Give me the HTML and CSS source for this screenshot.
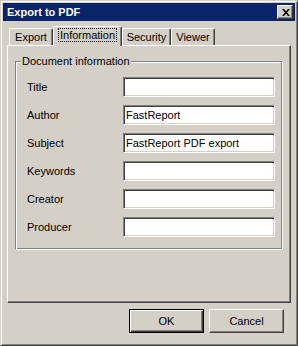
FILE: index.html
```html
<!DOCTYPE html>
<html lang="en">
<head>
    <meta charset="UTF-8">
    <title>Export to PDF</title>
    <link rel="stylesheet" href="styles.css">
</head>
<body>
    <div class="window">
        <div class="titlebar">
            <span class="caption">Export to PDF</span>
            <div class="close">
                <svg width="8" height="7" viewBox="0 0 8 7">
                    <path d="M0 0h2l2 2.2 2-2.2h2l-3 3.5 3 3.5h-2l-2-2.2-2 2.2h-2l3-3.5z" fill="#000"/>
                </svg>
            </div>
        </div>
        <div class="client">
            <div class="tabs">
                <div class="tab tab-export">Export</div>
                <div class="tab tab-info active"><span class="focus">Information</span></div>
                <div class="tab tab-security">Security</div>
                <div class="tab tab-viewer">Viewer</div>
            </div>
            <div class="panel">
                <div class="group">
                    <span class="legend">Document information</span>
                    <div class="fields">
                        <label>Title</label>
                        <div class="edit"></div>
                        <label>Author</label>
                        <div class="edit">FastReport</div>
                        <label>Subject</label>
                        <div class="edit">FastReport PDF export</div>
                        <label>Keywords</label>
                        <div class="edit"></div>
                        <label>Creator</label>
                        <div class="edit"></div>
                        <label>Producer</label>
                        <div class="edit"></div>
                    </div>
                </div>
            </div>
            <div class="buttons">
                <div class="btn default">OK</div>
                <div class="btn">Cancel</div>
            </div>
        </div>
    </div>
</body>
</html>
```

FILE: styles.css
```css
body{
    margin:0;
    font-family:"Liberation Sans", Arial, sans-serif;
    font-size:11px;
    color:#000;
    background:#d4d0c8;
}
.window{
    width:298px;
    height:346px;
    box-sizing:border-box;
    background:#d4d0c8;
    border:1px solid;
    border-color:#d4d0c8 #404040 #404040 #d4d0c8;
    box-shadow:inset 1px 1px #fff, inset -1px -1px #808080;
    padding:2px;
    display:flex;
    flex-direction:column;
}
.titlebar{
    height:18px;
    background:#0a246a;
    display:flex;
    align-items:center;
    padding:0 2px;
}
.caption{
    color:#fff;
    font-weight:bold;
    padding-left:2px;
}
.close{
    margin-left:auto;
    width:16px;
    height:14px;
    box-sizing:border-box;
    background:#d4d0c8;
    border:1px solid;
    border-color:#fff #404040 #404040 #fff;
    box-shadow:inset -1px -1px #808080;
    display:flex;
    align-items:center;
    justify-content:center;
    padding-left:1px;
}
.client{
    padding:0 4px;
    display:flex;
    flex-direction:column;
}
.tabs{
    margin-top:5px;
    height:19px;
    display:flex;
    align-items:flex-end;
    padding-left:2px;
}
.tab{
    height:17px;
    box-sizing:border-box;
    border-top:1px solid #fff;
    border-left:1px solid #fff;
    border-right:1px solid #404040;
    box-shadow:inset -1px 0 #808080;
    border-radius:2px 2px 0 0;
    display:flex;
    align-items:center;
    justify-content:center;
    padding-bottom:1px;
}
.tab-export{ width:44px; }
.tab-info{ width:69px; }
.tab-security{ width:49px; }
.tab-viewer{ width:44px; }
.tab.active{
    height:20px;
    margin-bottom:-1px;
    background:#d4d0c8;
    position:relative;
    z-index:1;
    padding-bottom:3px;
}
.focus{
    outline:1px dotted #000;
    padding:0 1px;
    line-height:12px;
}
.panel{
    height:258px;
    box-sizing:border-box;
    border:1px solid;
    border-color:#fff #404040 #404040 #fff;
    box-shadow:inset -1px -1px #808080;
    padding:15px 7px 0 7px;
}
.group{
    height:189px;
    box-sizing:border-box;
    border:1px solid;
    border-color:#808080 #fff #fff #808080;
    box-shadow:inset 1px 1px #fff, inset -1px -1px #808080;
}
.legend{
    display:block;
    width:max-content;
    margin:-7px 0 0 5px;
    padding:0 1px;
    line-height:13px;
    background:#d4d0c8;
}
.fields{
    margin-top:9px;
    padding-left:11px;
    display:grid;
    grid-template-columns:96px 152px;
    grid-auto-rows:20px;
    row-gap:8px;
    align-items:center;
}
.edit{
    height:20px;
    box-sizing:border-box;
    background:#fff;
    border:1px solid;
    border-color:#808080 #fff #fff #808080;
    box-shadow:inset 1px 1px #404040, inset -1px -1px #d4d0c8;
    padding:0 2px;
    line-height:18px;
    white-space:nowrap;
}
.buttons{
    margin-top:6px;
    display:flex;
    justify-content:flex-end;
    gap:5px;
    padding-right:7px;
}
.btn{
    width:75px;
    height:24px;
    box-sizing:border-box;
    border:1px solid;
    border-color:#fff #404040 #404040 #fff;
    box-shadow:inset -1px -1px #808080;
    display:flex;
    align-items:center;
    justify-content:center;
}
.btn.default{
    border-color:#000;
    box-shadow:inset 1px 1px #fff, inset -1px -1px #404040, inset -2px -2px #808080;
}
```
